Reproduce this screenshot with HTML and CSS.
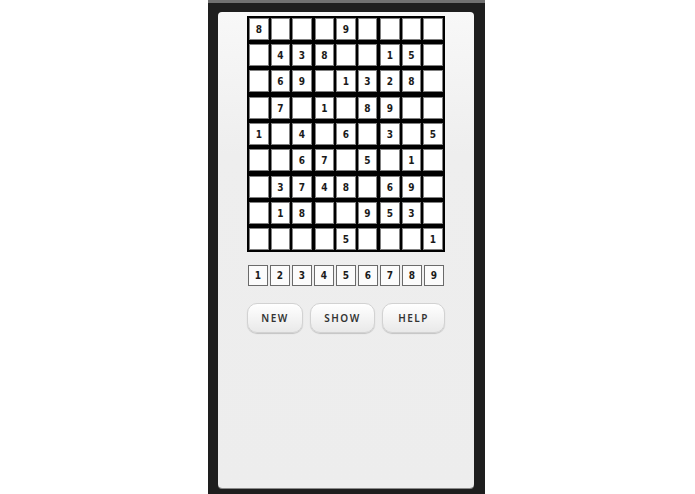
FILE: index.html
```html
<!DOCTYPE html>
<html>
<head>
<meta charset="utf-8">
<link rel="stylesheet" href="styles.css">
</head>
<body>
<div class="frame">
  <div class="panel">
    <div class="board">
      <div class="band">
        <div class="row"><div class="group"><div class="cell">8</div><div class="cell"></div><div class="cell"></div></div><div class="group"><div class="cell"></div><div class="cell">9</div><div class="cell"></div></div><div class="group"><div class="cell"></div><div class="cell"></div><div class="cell"></div></div></div>
        <div class="row"><div class="group"><div class="cell"></div><div class="cell">4</div><div class="cell">3</div></div><div class="group"><div class="cell">8</div><div class="cell"></div><div class="cell"></div></div><div class="group"><div class="cell">1</div><div class="cell">5</div><div class="cell"></div></div></div>
        <div class="row"><div class="group"><div class="cell"></div><div class="cell">6</div><div class="cell">9</div></div><div class="group"><div class="cell"></div><div class="cell">1</div><div class="cell">3</div></div><div class="group"><div class="cell">2</div><div class="cell">8</div><div class="cell"></div></div></div>
      </div>
      <div class="band">
        <div class="row"><div class="group"><div class="cell"></div><div class="cell">7</div><div class="cell"></div></div><div class="group"><div class="cell">1</div><div class="cell"></div><div class="cell">8</div></div><div class="group"><div class="cell">9</div><div class="cell"></div><div class="cell"></div></div></div>
        <div class="row"><div class="group"><div class="cell">1</div><div class="cell"></div><div class="cell">4</div></div><div class="group"><div class="cell"></div><div class="cell">6</div><div class="cell"></div></div><div class="group"><div class="cell">3</div><div class="cell"></div><div class="cell">5</div></div></div>
        <div class="row"><div class="group"><div class="cell"></div><div class="cell"></div><div class="cell">6</div></div><div class="group"><div class="cell">7</div><div class="cell"></div><div class="cell">5</div></div><div class="group"><div class="cell"></div><div class="cell">1</div><div class="cell"></div></div></div>
      </div>
      <div class="band">
        <div class="row"><div class="group"><div class="cell"></div><div class="cell">3</div><div class="cell">7</div></div><div class="group"><div class="cell">4</div><div class="cell">8</div><div class="cell"></div></div><div class="group"><div class="cell">6</div><div class="cell">9</div><div class="cell"></div></div></div>
        <div class="row"><div class="group"><div class="cell"></div><div class="cell">1</div><div class="cell">8</div></div><div class="group"><div class="cell"></div><div class="cell"></div><div class="cell">9</div></div><div class="group"><div class="cell">5</div><div class="cell">3</div><div class="cell"></div></div></div>
        <div class="row"><div class="group"><div class="cell"></div><div class="cell"></div><div class="cell"></div></div><div class="group"><div class="cell"></div><div class="cell">5</div><div class="cell"></div></div><div class="group"><div class="cell"></div><div class="cell"></div><div class="cell">1</div></div></div>
      </div>
    </div>
    <div class="picker">
      <div class="key">1</div><div class="key">2</div><div class="key">3</div><div class="key">4</div><div class="key">5</div><div class="key">6</div><div class="key">7</div><div class="key">8</div><div class="key">9</div>
    </div>
    <div class="actions">
      <div class="btn btn-new">NEW</div>
      <div class="btn btn-show">SHOW</div>
      <div class="btn btn-help">HELP</div>
    </div>
  </div>
</div>
</body>
</html>
```
FILE: styles.css
```css
html, body {
  margin: 0;
  padding: 0;
  background: #ffffff;
  height: 494px;
  overflow: hidden;
}
.frame {
  margin-left: 208px;
  width: 277px;
  height: 494px;
  box-sizing: border-box;
  background: #1e1e1e;
  border-top: 3px solid #707070;
  padding: 9px 11px 0 10px;
}
.panel {
  width: 256px;
  height: 476px;
  box-sizing: border-box;
  border-radius: 4px;
  background: linear-gradient(#f8f8f8, #eeeeee 30%, #ededed);
  box-shadow: 0 1px 0 #8a8a8a;
  display: flex;
  flex-direction: column;
  align-items: center;
  padding-top: 4px;
}
.board {
  background: #000;
  padding: 2px;
  display: flex;
  flex-direction: column;
  gap: 5px;
}
.band {
  display: flex;
  flex-direction: column;
  gap: 4px;
}
.row {
  display: flex;
  gap: 3px;
}
.group {
  display: flex;
  gap: 2px;
}
.cell {
  width: 19.5px;
  height: 22px;
  box-sizing: border-box;
  background: #fff;
  border: 1px solid #808080;
  display: flex;
  align-items: center;
  justify-content: center;
  font-family: "DejaVu Sans", sans-serif;
  font-stretch: condensed;
  font-weight: bold;
  font-size: 10px;
  color: #1a1a1a;
}
.picker {
  margin-top: 13px;
  display: flex;
  gap: 2px;
}
.key {
  width: 20px;
  height: 21px;
  box-sizing: border-box;
  background: #fbfbfb;
  border: 1px solid #6a6a6a;
  display: flex;
  align-items: center;
  justify-content: center;
  font-family: "DejaVu Sans", sans-serif;
  font-stretch: condensed;
  font-weight: bold;
  font-size: 10px;
  color: #1a1a1a;
}
.actions {
  margin-top: 17px;
  display: flex;
  gap: 7px;
}
.btn {
  height: 30px;
  box-sizing: border-box;
  border: 1px solid #d2d2d2;
  border-radius: 10px;
  background: linear-gradient(#ffffff, #f4f4f4 50%, #e9e9e9);
  box-shadow: 0 1px 1px rgba(0, 0, 0, 0.18);
  display: flex;
  align-items: center;
  justify-content: center;
  font-family: "Noto Sans", sans-serif;
  font-weight: 600;
  font-size: 10px;
  letter-spacing: 1.5px;
  color: #333333;
}
.btn-new { width: 56px; }
.btn-show { width: 65px; }
.btn-help { width: 63px; }
```
